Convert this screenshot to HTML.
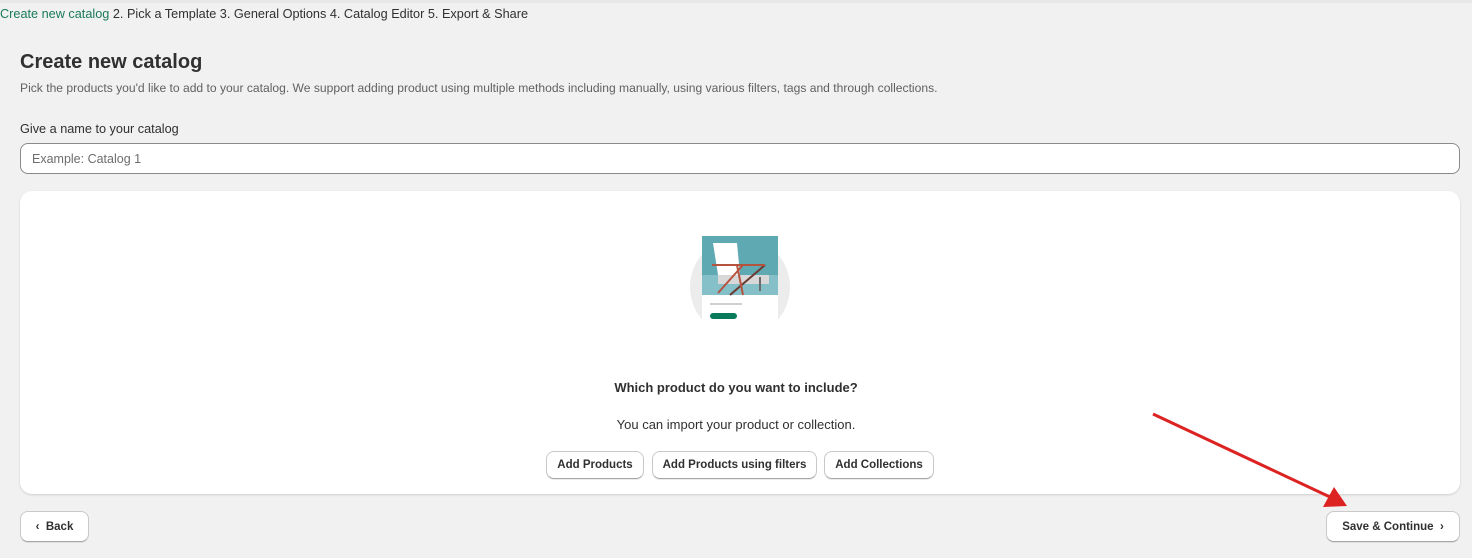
<!DOCTYPE html>
<html><head><style>
body{margin:0;width:1472px;height:558px;background:#f1f1f1;font-family:"Liberation Sans",sans-serif;color:#303030;position:relative;overflow:hidden}
.a{position:absolute;white-space:nowrap}
.btn{position:absolute;background:#fff;border:1px solid #c9c9c9;border-bottom-color:#a8a8a8;border-radius:8px;box-sizing:border-box;font-size:11.5px;font-weight:bold;color:#303030;display:flex;align-items:center;justify-content:center;box-shadow:0 1px 0 rgba(0,0,0,.08)}
</style></head><body>
<div style="position:absolute;left:0;top:0;width:1472px;height:3px;background:#e8e8e8"></div>
<div class="a" style="left:0;top:7px;font-size:12.7px;color:#303030"><span style="color:#1a7a5a">Create new catalog</span> 2. Pick a Template 3. General Options 4. Catalog Editor 5. Export &amp; Share</div>
<div class="a" style="left:20px;top:51px;font-size:20px;font-weight:bold">Create new catalog</div>
<div class="a" style="left:20px;top:81px;font-size:12.1px;color:#616161">Pick the products you'd like to add to your catalog. We support adding product using multiple methods including manually, using various filters, tags and through collections.</div>
<div class="a" style="left:20px;top:122px;font-size:12.7px">Give a name to your catalog</div>
<div style="position:absolute;left:20px;top:143px;width:1440px;height:31px;box-sizing:border-box;background:#fff;border:1px solid #8a8a8a;border-radius:8px"></div>
<div class="a" style="left:32px;top:152px;font-size:12.5px;color:#6d6d6d">Example: Catalog 1</div>
<div style="position:absolute;left:20px;top:191px;width:1440px;height:303px;background:#fff;border-radius:12px;box-shadow:0 1px 2px rgba(0,0,0,.15)"></div>
<svg style="position:absolute;left:680px;top:225px" width="120" height="110">
<defs><clipPath id="c"><rect x="0" y="0" width="120" height="96"/></clipPath></defs>
<circle cx="60" cy="62" r="50" fill="#ececec" clip-path="url(#c)"/>
<rect x="22" y="11" width="76" height="85" fill="#fff"/>
<rect x="22" y="11" width="76" height="59" fill="#5fa9b3"/>
<rect x="22" y="50" width="76" height="20" fill="#85bfc7"/>
<polygon points="33,18 57,18 60,50 38,50" fill="#fff"/>
<rect x="38" y="50" width="51" height="9" fill="#d8d8d8"/>
<line x1="80" y1="52" x2="80" y2="66" stroke="#6b6b6b" stroke-width="2"/>
<line x1="85" y1="40" x2="50" y2="70" stroke="#6b3a30" stroke-width="2"/>
<path d="M32 40 L85 40 M63 40 L38 68 M57 40 L63 70" stroke="#b5533f" stroke-width="2" fill="none"/>
<rect x="30" y="78" width="32" height="2" fill="#d0d0d0"/>
<rect x="30" y="88" width="27" height="6" rx="3" fill="#0a7a5c"/>
</svg>
<div class="a" style="width:1472px;text-align:center;top:380px;font-size:13px;font-weight:bold;left:0">Which product do you want to include?</div>
<div class="a" style="width:1472px;text-align:center;top:417px;font-size:13px;left:0">You can import your product or collection.</div>
<div class="btn" style="left:546px;top:451px;width:98px;height:28px">Add Products</div>
<div class="btn" style="left:652px;top:451px;width:165px;height:28px">Add Products using filters</div>
<div class="btn" style="left:824px;top:451px;width:110px;height:28px">Add Collections</div>
<div class="btn" style="left:20px;top:511px;width:69px;height:31px">‹&nbsp;&nbsp;Back</div>
<div class="btn" style="left:1326px;top:511px;width:134px;height:31px">Save &amp; Continue&nbsp;&nbsp;›</div>
<svg style="position:absolute;left:0;top:0" width="1472" height="558">
<line x1="1153" y1="414" x2="1330" y2="497" stroke="#dd2222" stroke-width="3"/>
<polygon points="1347,506 1323,507 1334,487" fill="#dd2222"/>
</svg>
</body></html>
